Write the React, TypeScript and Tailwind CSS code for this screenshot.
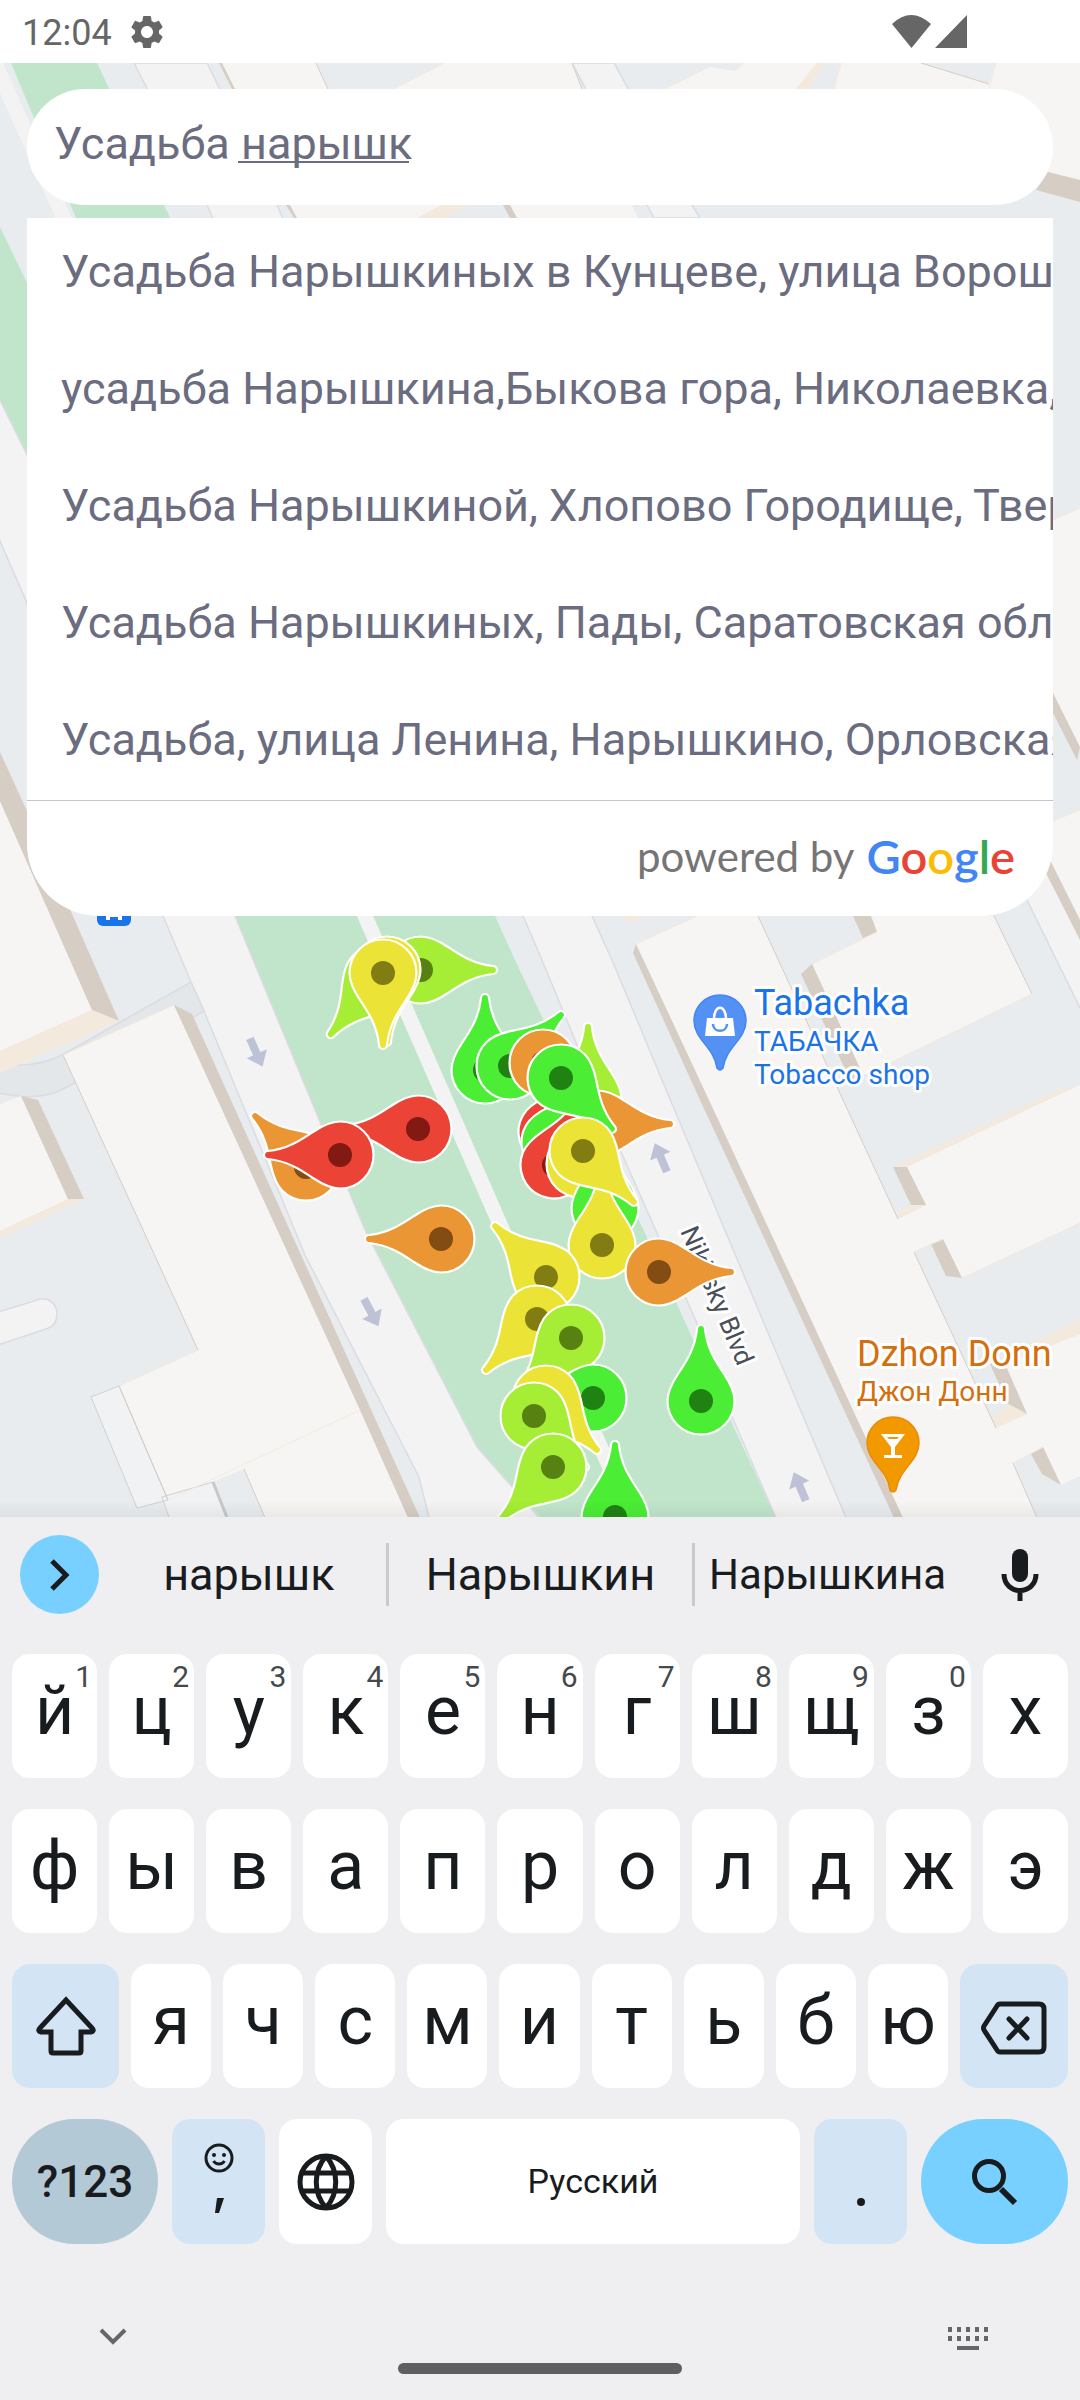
import React from 'react';

/* ---------- Map ---------- */

type Tone = 'green' | 'lime' | 'yellow' | 'orange' | 'red';

const TONES: Record<Tone, [string, string]> = {
  green: ['#4bed35', '#1f8212'],
  lime: ['#a6ed35', '#578212'],
  yellow: ['#ebe335', '#827d12'],
  orange: ['#eb9635', '#824c12'],
  red: ['#eb4335', '#821912'],
};

// x, y of the round end, heading of the tip in degrees (0 = up), tone
const PINS: [number, number, number, Tone][] = [
  [421, 970, 90, 'lime'],
  [377, 979, 220, 'lime'],
  [387, 970, 180, 'yellow'],
  [383, 973, 180, 'yellow'],
  [485, 1070, 0, 'green'],
  [510, 1066, 45, 'green'],
  [588, 1099, 0, 'lime'],
  [543, 1063, 135, 'orange'],
  [598, 1124, 90, 'orange'],
  [552, 1132, 30, 'red'],
  [555, 1142, 30, 'green'],
  [554, 1165, 22, 'red'],
  [580, 1164, 135, 'yellow'],
  [605, 1208, 0, 'green'],
  [602, 1245, 0, 'yellow'],
  [561, 1078, 135, 'green'],
  [583, 1151, 135, 'yellow'],
  [418, 1129, 270, 'red'],
  [306, 1167, 315, 'orange'],
  [340, 1155, 270, 'red'],
  [441, 1239, 270, 'orange'],
  [546, 1277, 315, 'yellow'],
  [537, 1319, 225, 'yellow'],
  [571, 1338, 225, 'lime'],
  [593, 1398, 270, 'green'],
  [546, 1399, 135, 'yellow'],
  [534, 1416, 135, 'lime'],
  [553, 1467, 225, 'lime'],
  [615, 1517, 0, 'green'],
  [659, 1272, 90, 'orange'],
  [701, 1401, 0, 'green'],
];

function Pin({ x, y, angle, tone }: { x: number; y: number; angle: number; tone: Tone }) {
  const [fill, dot] = TONES[tone];
  return (
    <g transform={`translate(${x} ${y}) rotate(${angle})`}>
      <path
        d="M-33.500 0A33.500 33.500 0 1 0 33.500 0C33.500-10 29-18 23-27C15-39 6-52 4-72A4 4 0 0 0-4-72C-6-52-15-39-23-27C-29-18-33.500-10-33.500 0Z"
        fill={fill}
        stroke="#fff"
        strokeWidth="2.200"
      />
      <circle r="12" fill={dot} />
    </g>
  );
}

function RoadArrow({ x, y, angle }: { x: number; y: number; angle: number }) {
  return (
    <path
      transform={`translate(${x} ${y}) rotate(${angle})`}
      d="M0-16L11-2H4V15H-4V-2H-11Z"
      fill="#bec2d6"
    />
  );
}

function MapCanvas() {
  return (
    <svg
      className="absolute inset-0 h-full w-full"
      viewBox="0 63 1080 1454"
      preserveAspectRatio="xMinYMin slice"
      role="img"
      aria-label="Map of Nikitsky Boulevard"
    >
      <rect y="63" width="1080" height="1500" fill="#e8ecef" />
      {/* boulevard lawns */}
      <path
        fill="#c0e5cb"
        d="M-150 63H97L164 205L495 916L515 960L645 1233L690 1333L777 1520H543L513 1488L477 1447L365 1230L320 1122L235 916L27 455L0 400Z"
      />
      <path fill="#e8ecef" d="M-80 63H11L34 118L76 218L140 350L27 283L0 227L-80 60Z" />
      <path d="M-5 63L58 205L365 916L499 1222L620 1490" fill="none" stroke="#f3f3f3" strokeWidth="15" />
      {/* roadways */}
      <g fill="#f3f3f3" stroke="#dbdce1" strokeWidth="1.500">
        <path d="M-60 272L0 400L27 455L235 916L320 1122L365 1230L477 1447L513 1488L550 1530H432L419 1477L305 1255L204 1011L191 982L163 916L0 541L-60 420Z" />
        <path d="M134 63L207 205L523 916L542 960L622 1154L657 1233L700 1330L733 1419L777 1520H847L800 1409L680 1123L612 960L592 916L277 205L207 63Z" />
        <path d="M572 63L647 205L654 218H700L692 205L614 63Z" />
        <path d="M-5 1313L34 1301C50 1294 57 1306 57 1314C57 1322 53 1327 46 1329L-5 1346Z" />
      </g>
      <path
        d="M-3 1064C20 1066 40 1066 62 1055L191 982L204 1011L114 1063L57 1092C35 1099 20 1097-3 1093Z"
        fill="#e3e7ea"
        stroke="#d9dce0"
        strokeWidth="1.500"
      />
      {/* roofs */}
      <g fill="#f6f5f3">
        <path d="M222 63H316L328 89H233Z M444 63H572L582 89H394Z M664 89L709 67L736 71L744 63H817L796 89Z M841 63H921L989 84L996 63H1080V180L1048 172L1000 140V89H834Z" />
        <path d="M289 205H442L417 218H295Z M509 205H632L638 218H516Z" />
        <path d="M0 801L92 1010L0 1051Z" />
        <path d="M0 1104L21 1096L68 1199L0 1231Z" />
        <path d="M63 1055L174 1005L360 1410L410 1520H266L244 1469L168 1500L119 1386L198 1350Z" />
        <path d="M636 944L697 916H758L898 1219L926 1205L907 1167L1077 1086H1080V1223L962 1278L943 1239L914 1252L996 1428L1027 1414L1005 1364L1080 1334V1476L1061 1485L1043 1447L1013 1463L1038 1520H904Z" />
        <path d="M812 964L877 932L871 916H994L1032 994L896 1060L863 1075Z" />
        <path d="M1053 821L1080 810V920L1050 860Z M1053 520L1080 508V747L1053 693Z" />
      </g>
      <path d="M1026 898L1046 873L1080 940V1008Z" fill="#f3f3f3" />
      <path d="M1026 898L1080 1008" stroke="#dbdce1" strokeWidth="1.500" />
      <g fill="#f1f2f4" stroke="#cfd1d3">
        <path d="M91 1397L119 1386L168 1500L137 1508Z M162 1497L213 1482L227 1520H170Z" />
      </g>
      <path d="M213 1482L228 1520" stroke="#c6c9cb" strokeWidth="3" />
      {/* shaded walls */}
      <g fill="#d6cdc4">
        <path d="M219 63H222L235 89H232Z M286 205H290L297 218H294Z M503 205H510L517 218H510Z M1048 172L1080 180V202L1036 190Z" />
        <path d="M0 752L27 811L119 1021L92 1010L0 801Z" />
        <path d="M21 1096L38 1100L84 1199H68Z" />
        <path d="M174 1005L192 1014L421 1520H409L360 1410Z" />
        <path d="M636 944L633 953L700 1100L895 1520H904L709 1100Z" />
        <path d="M893 1167H907L926 1205H911Z M931 1244L943 1239L962 1278L946 1276Z M990 1364H1005L1027 1414L1008 1404Z M1031 1454L1043 1447L1061 1485L1042 1474Z" />
        <path d="M801 974L812 964L863 1075L850 1080Z M853 916H871L877 932L863 938Z" />
        <path d="M1053 693L1080 747L1077 760L1053 713Z M1050 860L1080 920V940L1046 873Z" />
      </g>
      {/* lit walls */}
      <g fill="#f4e9dd">
        <path d="M0 1051L92 1010L119 1021L0 1073Z M0 1231L68 1199H84L0 1238Z" />
        <path d="M442 205H469L444 218H417Z M817 63H825L808 89H796Z" />
        <path d="M893 1167L1062 1088L1077 1086L907 1167Z M897 1213L898 1219L926 1205H911Z M990 1364L1080 1319V1334L1005 1364Z M992 1418L996 1428L1027 1414L1008 1404Z" />
        <path d="M628 923L643 916H624Z" />
      </g>
      <g fill="none" strokeWidth="1">
        <path stroke="#d6cdc4" d="M316 63L328 89 M572 63L582 89 M63 1055L198 1350 M119 1386L168 1500 M244 1469L266 1520 M758 916L898 1219 M914 1252L996 1428 M1013 1463L1038 1520 M994 916L1032 994 M921 63L989 84" />
        <path stroke="#f7e8da" d="M444 63L394 89 M664 89L709 67 M841 63L834 89 M996 63L989 89 M63 1055L174 1005 M119 1386L198 1350 M168 1500L360 1410 M636 944L697 916 M896 1060L1032 994 M962 1278L1080 1223 M812 964L877 932 M914 1252L943 1239 M1013 1463L1043 1447 M1053 520L1080 508 M1053 821L1080 810" />
      </g>

      <RoadArrow x={256} y={1052} angle={156} />
      <RoadArrow x={371} y={1312} angle={152} />
      <RoadArrow x={661} y={1158} angle={-23} />
      <RoadArrow x={800} y={1487} angle={-23} />

      {/* bus stop */}
      <rect x="97" y="892" width="34" height="34" rx="6" fill="#1a73e8" />
      <path d="M106 912H122V920H118V917H110V920H106Z" fill="#fff" />

      <g
        className="font-['Roboto',sans-serif]"
        stroke="#fff"
        strokeWidth="6"
        strokeLinejoin="round"
        style={{ paintOrder: 'stroke' }}
      >
        <text x="754" y="1015" fontSize="36" fill="#1a73e8">Tabachka</text>
        <text x="754" y="1051" fontSize="28" fill="#1a73e8">ТАБАЧКА</text>
        <text x="754" y="1084" fontSize="28" fill="#1a73e8">Tobacco shop</text>
        <text x="857" y="1366" fontSize="36" fill="#d56e0c">Dzhon Donn</text>
        <text x="857" y="1401" fontSize="28" fill="#d56e0c">Джон Донн</text>
        <text transform="translate(680 1231) rotate(67)" fontSize="26" fill="#4a4f57">Nikitsky Blvd</text>
      </g>

      {/* shop marker */}
      <path d="M720 995C705 995 694 1007 694 1021C694 1039 714 1047 717 1068Q720 1072 723 1068C726 1047 746 1039 746 1021C746 1007 735 995 720 995Z" fill="#5491f5" stroke="#4285f4" strokeWidth="1.500" />
      <path d="M707 1018H733L735 1036H705Z" fill="#fff" />
      <path d="M714 1019C714 1004 726 1004 726 1019" fill="none" stroke="#fff" strokeWidth="2.500" />
      <path d="M713 1024C713 1033 727 1033 727 1024" fill="none" stroke="#5491f5" strokeWidth="2.500" />
      {/* bar marker */}
      <path d="M893 1417C878 1417 867 1429 867 1443C867 1461 887 1469 890 1490Q893 1494 896 1490C899 1469 919 1461 919 1443C919 1429 908 1417 893 1417Z" fill="#f29900" stroke="#e98b0b" strokeWidth="1.500" />
      <path d="M881 1434H905L895 1447V1455H902V1458H884V1455H891V1447ZM887 1437L889 1439H897L899 1437Z" fill="#fff" fillRule="evenodd" />

      {PINS.map(([x, y, angle, tone]) => (
        <Pin key={`${x}-${y}`} x={x} y={y} angle={angle} tone={tone} />
      ))}
    </svg>
  );
}

/* ---------- Search ---------- */

const RESULTS = [
  'Усадьба Нарышкиных в Кунцеве, улица Ворошиловский Парк, Москва',
  'усадьба Нарышкина,Быкова гора, Николаевка, Россия',
  'Усадьба Нарышкиной, Хлопово Городище, Тверская область',
  'Усадьба Нарышкиных, Пады, Саратовская область, Россия',
  'Усадьба, улица Ленина, Нарышкино, Орловская область',
];

function SearchPanel() {
  return (
    <div className="relative flex flex-col gap-[13px] px-[27px] pt-[26px] text-[45px] leading-[52px] text-[#6b6c80]">
      <div className="relative">
        <input
          type="text"
          aria-label="Поиск места"
          defaultValue="Усадьба нарышк"
          spellCheck={false}
          className="block h-[116px] w-full rounded-full bg-white px-[27px] pb-2 outline-none"
        />
        <span className="absolute top-[72px] left-[211px] h-[2px] w-[171px] bg-[#6b6c80]" />
      </div>
      <div className="overflow-hidden rounded-b-[72px] bg-white">
        <ul className="flex flex-col gap-[65px] border-b border-[#c3c4ce] pt-7 pb-[34px]">
          {RESULTS.map((r) => (
            <li key={r}>
              <button type="button" className="block w-full overflow-hidden pl-[34px] text-left whitespace-nowrap">
                {r}
              </button>
            </li>
          ))}
        </ul>
        <div className="flex h-[115px] items-center justify-end gap-3 pr-[38px] pb-1.5 font-['Lato',sans-serif]">
          <span className="text-[42px] text-[#757575]">powered by</span>
          <span className="text-[47px] font-semibold">
            <span className="text-[#4285f4]">G</span>
            <span className="text-[#ea4335]">o</span>
            <span className="text-[#fbbc05]">o</span>
            <span className="text-[#4285f4]">g</span>
            <span className="text-[#34a853]">l</span>
            <span className="text-[#ea4335]">e</span>
          </span>
        </div>
      </div>
    </div>
  );
}

/* ---------- Keyboard ---------- */

const ROW_1 = ['й', 'ц', 'у', 'к', 'е', 'н', 'г', 'ш', 'щ', 'з', 'х'];
const ROW_2 = ['ф', 'ы', 'в', 'а', 'п', 'р', 'о', 'л', 'д', 'ж', 'э'];
const ROW_3 = ['я', 'ч', 'с', 'м', 'и', 'т', 'ь', 'б', 'ю'];
const HINTS = ['1', '2', '3', '4', '5', '6', '7', '8', '9', '0', ''];

function LetterKey({ letter, hint }: { letter: string; hint?: string }) {
  return (
    <button type="button" className="relative flex h-[124px] min-w-0 flex-1 justify-center rounded-[18px] bg-white pt-[17px] text-[68px] leading-[80px]">
      {letter}
      {hint ? <span className="absolute top-2 right-[5px] text-[30px] leading-[30px] text-[#46494b]">{hint}</span> : null}
    </button>
  );
}

function Keyboard() {
  return (
    <section aria-label="Клавиатура" className="relative bg-[#efeff1] text-[#191c1e]">
      <div className="flex h-[137px] items-start pt-[18px] pl-5">
        <button type="button" aria-label="Ещё" className="flex size-[79px] shrink-0 items-center justify-center rounded-full bg-[#77d0ff]">
          <svg width="20" height="32" viewBox="0 0 20 32" fill="none" stroke="currentColor" strokeWidth="5">
            <path d="M2 2L16 16L2 30" />
          </svg>
        </button>
        <div className="mt-2 ml-[13px] flex h-[63px] flex-1 items-center divide-x-[3px] divide-[#c9cacc] text-[45px] leading-[63px] whitespace-nowrap">
          <button type="button" className="h-full min-w-0 flex-[276]">нарышк</button>
          <button type="button" className="h-full min-w-0 flex-[306]">Нарышкин</button>
          <button type="button" className="h-full min-w-0 flex-[267] text-[42px]">Нарышкина</button>
        </div>
        <button type="button" aria-label="Голосовой ввод" className="flex h-[79px] w-[120px] shrink-0 items-center justify-center">
          <svg width="38" height="52" viewBox="0 0 38 52">
            <rect x="11" width="16" height="33" rx="8" fill="currentColor" />
            <path d="M3 25C3 47 35 47 35 25M19 41V52" fill="none" stroke="currentColor" strokeWidth="5" />
          </svg>
        </button>
      </div>
      <div className="flex flex-col gap-[31px] px-3">
        <div className="flex gap-3">
          {ROW_1.map((l, i) => <LetterKey key={l} letter={l} hint={HINTS[i]} />)}
        </div>
        <div className="flex gap-3">
          {ROW_2.map((l) => <LetterKey key={l} letter={l} />)}
        </div>
        <div className="flex gap-3">
          <button type="button" aria-label="Shift" className="flex h-[124px] w-[107px] items-center justify-center rounded-[18px] bg-[#d3e5f5]">
            <svg width="60" height="60" viewBox="0 0 60 60" fill="none" stroke="currentColor" strokeWidth="5">
              <path d="M30 4L56 32Q59 35 55 36H45V55Q45 57 43 57H17Q15 57 15 55V36H5Q1 35 4 32Z" strokeLinejoin="miter" />
            </svg>
          </button>
          {ROW_3.map((l) => <LetterKey key={l} letter={l} />)}
          <button type="button" aria-label="Backspace" className="flex h-[124px] w-[108px] items-center justify-center rounded-[18px] bg-[#d3e5f5] pt-1">
            <svg width="68" height="54" viewBox="0 0 68 54" fill="none" stroke="currentColor" strokeWidth="5" strokeLinejoin="round" strokeLinecap="round">
              <path d="M20 3H59Q64 3 64 8V46Q64 51 59 51H20Q18 51 17 49L4 29Q3 27 4 25L17 5Q18 3 20 3Z" />
              <path d="M29 18L47 37M47 18L29 37" />
            </svg>
          </button>
        </div>
        <div className="flex gap-[14px]">
          <button type="button" className="h-[125px] w-[146px] rounded-full bg-[#b4c9d6] text-[44px] font-medium">?123</button>
          <button type="button" className="flex h-[125px] w-[93px] flex-col items-center rounded-[18px] bg-[#d3e5f5] pt-6" aria-label="Запятая">
            <svg width="30" height="30" viewBox="0 0 30 30" fill="none" stroke="currentColor" strokeWidth="3">
              <circle cx="15" cy="15" r="13" />
              <path d="M9.500 18C12 22 18 22 20.500 18" />
              <circle cx="10" cy="12" r="2" fill="currentColor" stroke="none" />
              <circle cx="20" cy="12" r="2" fill="currentColor" stroke="none" />
            </svg>
            <svg className="mt-[25px]" width="12" height="16" viewBox="0 0 12 16" fill="currentColor">
              <path d="M4 0H11L6 15H2Z" />
            </svg>
          </button>
          <button type="button" aria-label="Язык" className="flex h-[125px] w-[93px] items-center justify-center rounded-[18px] bg-white">
            <svg width="58" height="58" viewBox="0 0 58 58" fill="none" stroke="currentColor" strokeWidth="5">
              <circle cx="29" cy="29" r="26" />
              <path d="M5 20H53M5 38H53M29 3C16 18 16 40 29 55M29 3C42 18 42 40 29 55" />
            </svg>
          </button>
          <button type="button" className="h-[125px] flex-1 rounded-[18px] bg-white text-[34px]">Русский</button>
          <button type="button" aria-label="Точка" className="flex h-[125px] w-[93px] justify-center rounded-[18px] bg-[#d3e5f5] pt-[79px]">
            <span className="size-2 rounded-full bg-[#191c1e]" />
          </button>
          <button type="button" aria-label="Искать" className="flex h-[125px] w-[147px] items-center justify-center rounded-full bg-[#77d0ff]">
            <svg width="48" height="48" viewBox="0 0 48 48" fill="none" stroke="currentColor" strokeWidth="5">
              <circle cx="18" cy="18" r="14.500" />
              <path d="M30 31L44 45" strokeWidth="6" />
            </svg>
          </button>
        </div>
      </div>
      <div className="flex items-start justify-between pt-[83px] pr-[92px] pb-3 pl-[99px] text-[#666]">
        <button type="button" aria-label="Скрыть клавиатуру" className="flex h-5 items-center">
          <svg width="28" height="18" viewBox="0 0 28 18" fill="none" stroke="currentColor" strokeWidth="4">
            <path d="M2 2L14 14L26 2" />
          </svg>
        </button>
        <button type="button" aria-label="Выбрать клавиатуру">
          <svg width="40" height="24" viewBox="0 0 40 24" fill="currentColor">
            <path d="M0 0h4v5h-4z M9 0h4v5h-4z M18 0h4v5h-4z M27 0h4v5h-4z M36 0h4v5h-4z M0 9h4v5h-4z M9 9h4v5h-4z M18 9h4v5h-4z M27 9h4v5h-4z M36 9h4v5h-4z M9 19h22v4h-22z" />
          </svg>
        </button>
      </div>
      <div className="flex justify-center pb-[26px]">
        <div className="h-[11px] w-[284px] rounded-full bg-[#5f5f5f]" />
      </div>
    </section>
  );
}

/* ---------- Screen ---------- */

function StatusBar() {
  return (
    <header className="flex h-[63px] items-center bg-white pr-[113px] pl-[22px] text-[#666]">
      <span className="pt-0.5 text-[36px] leading-[40px]">12:04</span>
      <svg className="ml-[15px]" width="40" height="40" viewBox="0 0 24 24" fill="currentColor">
        <path d="M19.140 12.940c.040-.300.060-.610.060-.940 0-.320-.020-.640-.070-.940l2.030-1.580c.180-.140.230-.410.120-.610l-1.920-3.320c-.120-.220-.370-.290-.590-.220l-2.390.960c-.500-.380-1.030-.700-1.620-.940l-.360-2.540c-.040-.240-.240-.410-.480-.410h-3.840c-.240 0-.430.170-.470.410l-.360 2.540c-.590.240-1.130.570-1.620.940l-2.390-.960c-.220-.080-.470 0-.590.220L2.740 8.870c-.120.210-.080.470.120.610l2.030 1.580c-.050.300-.090.630-.090.940s.020.640.070.940l-2.030 1.580c-.180.140-.230.410-.120.610l1.920 3.320c.120.220.370.290.590.220l2.390-.960c.500.380 1.030.700 1.620.940l.360 2.540c.050.240.240.410.480.410h3.840c.240 0 .440-.170.470-.410l.360-2.540c.590-.240 1.130-.560 1.620-.940l2.390.960c.220.080.470 0 .590-.220l1.920-3.320c.120-.220.070-.470-.120-.610l-2.010-1.580zM12 15.600c-1.980 0-3.600-1.620-3.600-3.600s1.620-3.600 3.600-3.600 3.600 1.620 3.600 3.600-1.620 3.600-3.600 3.600z" />
      </svg>
      <svg className="ml-auto" width="75" height="33" viewBox="0 0 75 33" fill="currentColor">
        <path d="M0 9Q19-9 39 9L19.500 33Z M75 0V33H43Z" />
      </svg>
    </header>
  );
}

export default function App() {
  return (
    <div className="flex min-h-screen flex-col overflow-hidden bg-white font-['Roboto',sans-serif]">
      <StatusBar />
      <main className="relative flex-1 overflow-hidden">
        <MapCanvas />
        <SearchPanel />
        <div className="pointer-events-none absolute inset-x-0 bottom-0 h-4 bg-linear-to-b from-transparent to-black/5" />
      </main>
      <Keyboard />
    </div>
  );
}
